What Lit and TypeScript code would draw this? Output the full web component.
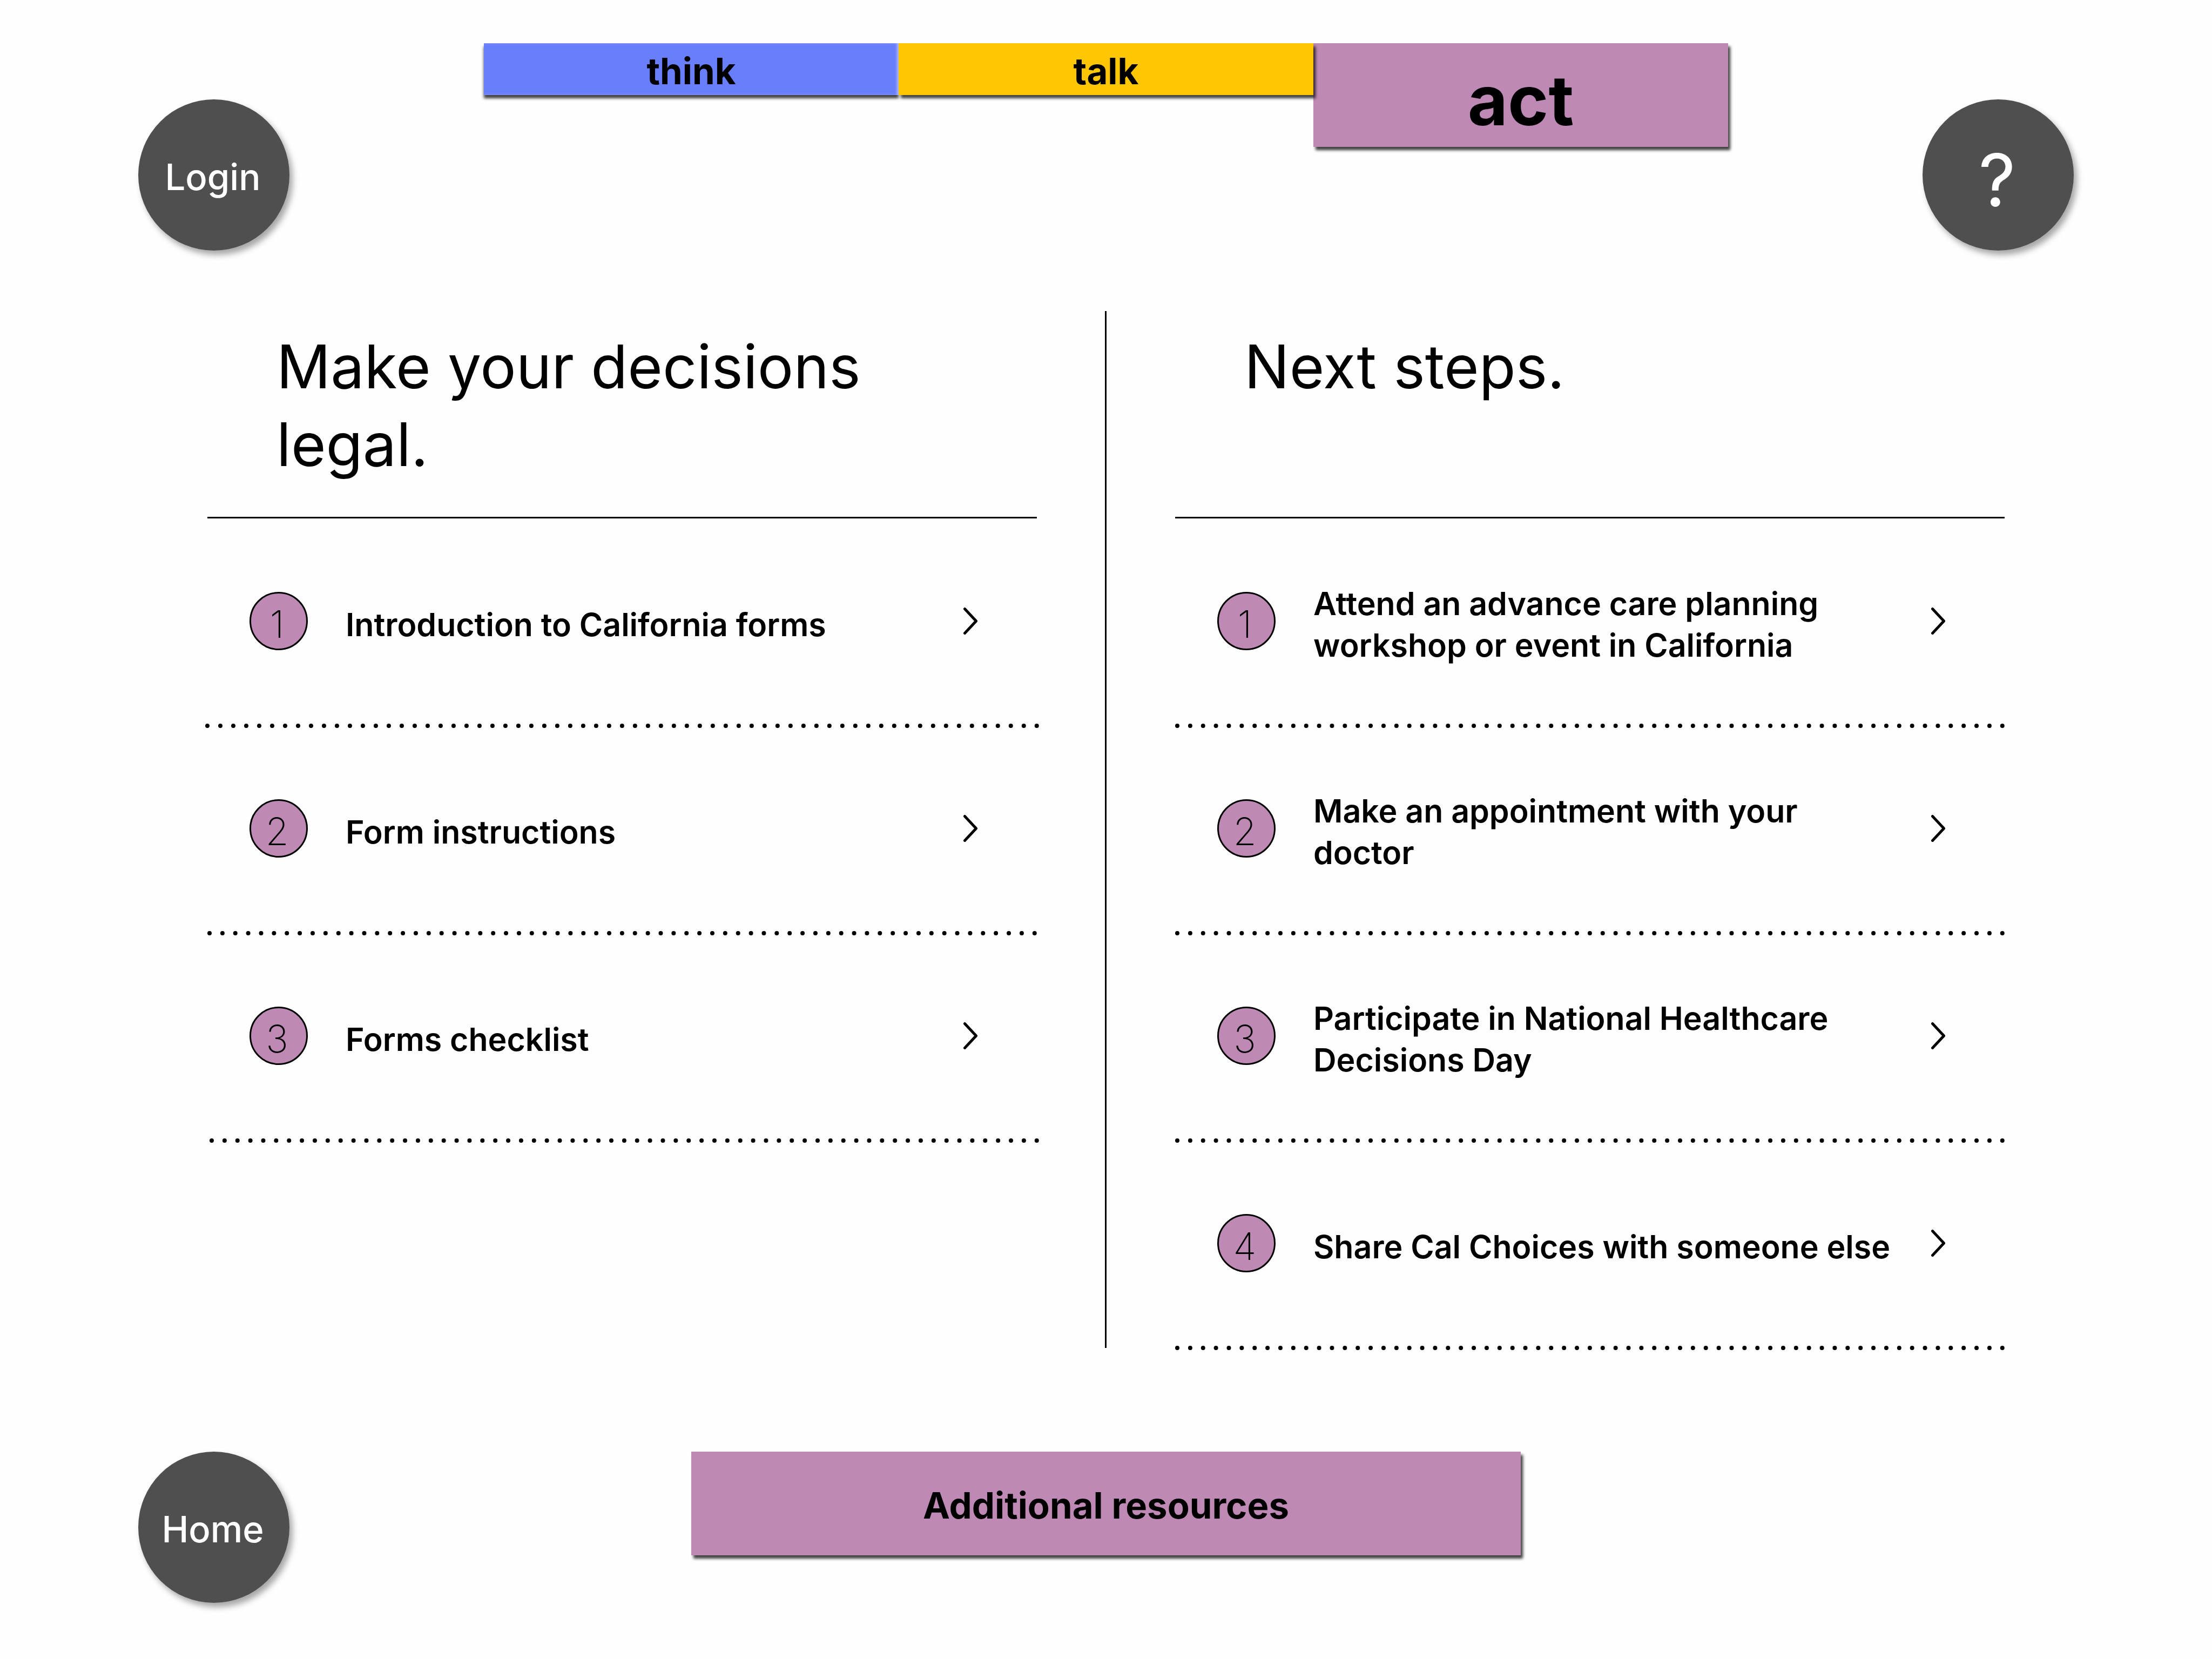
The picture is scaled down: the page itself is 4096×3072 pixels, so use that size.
import { LitElement, html, css, svg } from "lit";
import { customElement, property } from "lit/decorators.js";
import { classMap } from "lit/directives/class-map.js";

interface Step {
  label: string;
  rule?: "wide" | "late";
}

const LEGAL: Step[] = [
  { label: "Introduction to California forms", rule: "wide" },
  { label: "Form instructions" },
  { label: "Forms checklist", rule: "late" },
];

const NEXT: Step[] = [
  { label: "Attend an advance care planning workshop or event in California" },
  { label: "Make an appointment with your doctor" },
  { label: "Participate in National Healthcare Decisions Day" },
  { label: "Share Cal Choices with someone else" },
];

const chevron = svg`<svg class="chevron" viewBox="0 0 26 50" aria-hidden="true">
  <path d="M2.5 2.5 L23.5 25 L2.5 47.5" fill="none" stroke="#000" stroke-width="5" stroke-linecap="round" stroke-linejoin="round" />
</svg>`;

@customElement("step-panel")
export class StepPanel extends LitElement {
  @property() heading = "";
  @property({ attribute: false }) steps: Step[] = [];

  static styles = css`
    :host {
      display: block;
    }
    .heading {
      box-sizing: border-box;
      min-height: 384px;
      margin: 0;
      padding: 31px 128px 0;
      border-bottom: 3px solid #000;
      font-size: 111px;
      line-height: 144px;
      font-weight: 400;
    }
    .list {
      margin: 0;
      padding: 4px 0 0;
      list-style: none;
    }
    .row {
      box-sizing: border-box;
      display: grid;
      grid-template-columns: 108px minmax(0, 1fr) 26px;
      align-items: center;
      min-height: 376px;
      padding: 0 110px 4px 78px;
      color: #000;
      text-decoration: none;
    }
    .number {
      box-sizing: border-box;
      display: grid;
      place-items: center;
      width: 108px;
      height: 108px;
      padding: 11px 6px 0 0;
      border: 3px solid #000;
      border-radius: 50%;
      background: #be89b5;
      font-size: 70px;
      line-height: 84px;
      font-weight: 250;
    }
    .label {
      padding: 12px 56px 0 70px;
      font-size: 59px;
      line-height: 77px;
      font-weight: 600;
    }
    .chevron {
      display: block;
      width: 26px;
      height: 50px;
    }
    .dots {
      display: block;
      box-sizing: border-box;
      height: 8px;
      padding: 0 4px;
    }
    .dots.wide {
      padding: 0;
    }
    .dots.late {
      padding: 0 0 0 8px;
    }
    .dots svg {
      display: block;
      width: 100%;
      height: 8px;
      overflow: visible;
    }
  `;

  render() {
    return html`
      <h2 class="heading">${this.heading}</h2>
      <ol class="list">
        ${this.steps.map(
          (step, i) => html`
            <li>
              <a class="row" href="#">
                <span class="number">${i + 1}</span>
                <span class="label">${step.label}</span>
                ${chevron}
              </a>
              <div class=${classMap({ dots: true, wide: step.rule === "wide", late: step.rule === "late" })}>
                <svg aria-hidden="true">
                  <line x1="0" y1="4" x2="100%" y2="4" pathLength="6401" stroke="#000"
                    stroke-width="8" stroke-linecap="round" stroke-dasharray="0 100" />
                </svg>
              </div>
            </li>
          `,
        )}
      </ol>
    `;
  }
}

@customElement("app-root")
export class AppRoot extends LitElement {
  static styles = css`
    :host {
      display: block;
      box-sizing: border-box;
      min-height: 100vh;
      background: #fefefe;
      color: #000;
      font-family: Inter, "Liberation Sans", sans-serif;
    }
    .bar {
      display: grid;
      grid-template-columns: 280px minmax(0, 1fr) 280px;
      align-items: start;
      padding: 0 256px;
    }
    .top {
      box-sizing: border-box;
      min-height: 576px;
      padding-top: 80px;
    }
    .bottom {
      padding-top: 188px;
      padding-bottom: 96px;
    }
    button {
      box-sizing: border-box;
      margin: 0;
      border: 0;
      font-family: inherit;
      color: inherit;
      cursor: pointer;
    }
    .round {
      width: 280px;
      height: 280px;
      padding: 8px 4px 0 0;
      border-radius: 50%;
      background: #4f4f4f;
      box-shadow: 6px 8px 12px rgba(0, 0, 0, 0.35);
      color: #fff;
      font-size: 67px;
      line-height: 80px;
      font-weight: 550;
    }
    .top .round {
      margin-top: 104px;
    }
    .round.help {
      padding-top: 18px;
      font-size: 134px;
      line-height: 160px;
      font-weight: 400;
    }
    .tabs {
      display: grid;
      grid-template-columns: repeat(3, minmax(0, 1fr));
      align-items: start;
      padding: 0 360px;
    }
    .tab,
    .resources {
      padding: 8px 0 0;
      box-shadow: 4px 6px 5px rgba(0, 0, 0, 0.75);
      font-size: 67px;
      line-height: 80px;
      font-weight: 700;
    }
    .tab {
      height: 96px;
    }
    .think {
      background: #697efa;
      box-shadow:
        0 6px 5px rgba(0, 0, 0, 0.75),
        inset -4px 0 4px -1px rgba(255, 255, 255, 0.5);
    }
    .talk {
      z-index: 1;
      background: #ffc603;
    }
    .act {
      height: 192px;
      padding-top: 20px;
      background: #be89b5;
      font-size: 128px;
      line-height: 156px;
    }
    .resources {
      justify-self: center;
      width: 100%;
      max-width: 1536px;
      height: 192px;
      background: #be89b5;
    }
    .columns {
      display: grid;
      grid-template-columns: minmax(0, 1fr) 4px minmax(0, 1fr);
      gap: 126px;
      padding: 0 384px;
    }
    .divider {
      margin-bottom: 4px;
      border-left: 3px solid #000;
    }
  `;

  render() {
    return html`
      <header class="bar top">
        <button class="round">Login</button>
        <nav class="tabs">
          <button class="tab think">think</button>
          <button class="tab talk">talk</button>
          <button class="tab act">act</button>
        </nav>
        <button class="round help">?</button>
      </header>
      <main class="columns">
        <step-panel heading="Make your decisions legal." .steps=${LEGAL}></step-panel>
        <div class="divider"></div>
        <step-panel heading="Next steps." .steps=${NEXT}></step-panel>
      </main>
      <footer class="bar bottom">
        <button class="round">Home</button>
        <button class="resources">Additional resources</button>
      </footer>
    `;
  }
}
